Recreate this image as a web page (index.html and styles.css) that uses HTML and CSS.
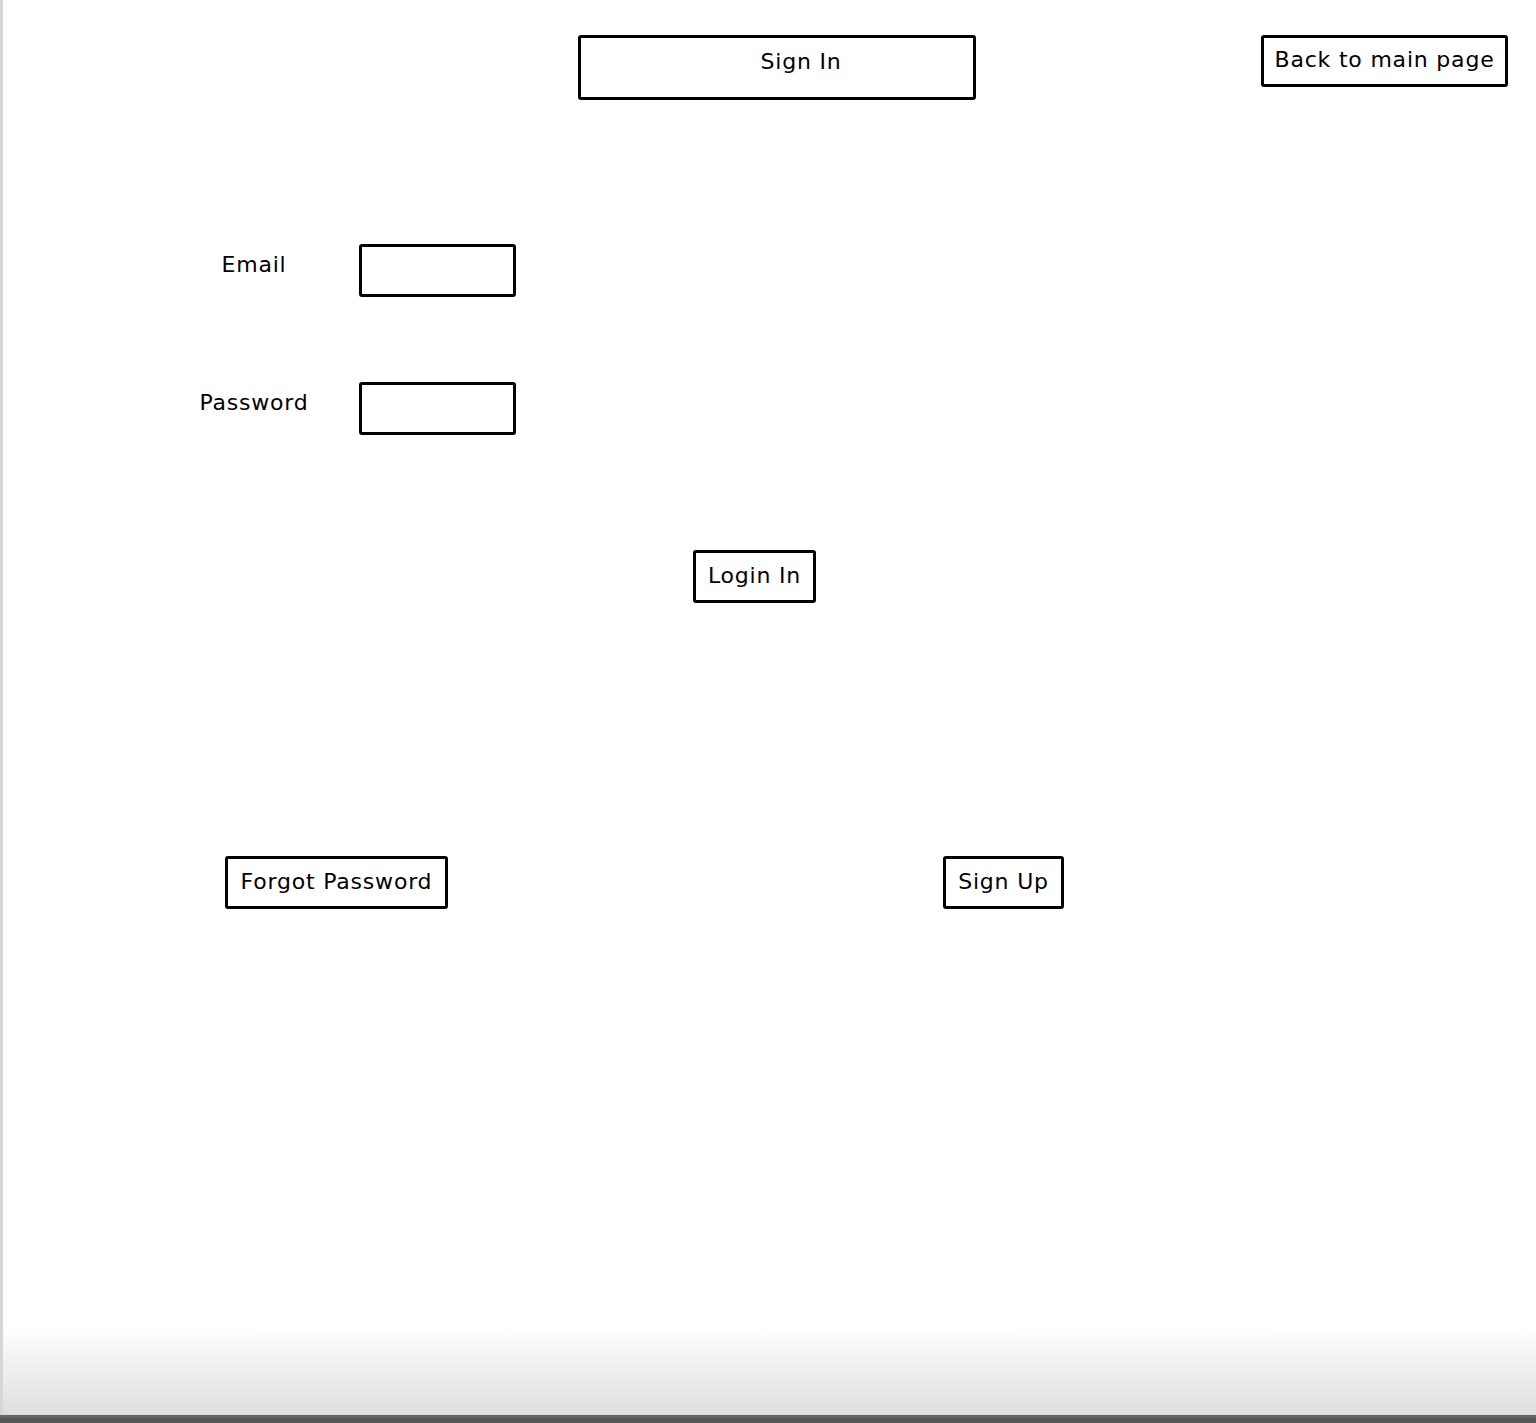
FILE: index.html
```html
<!DOCTYPE html>
<html lang="en">
<head>
<meta charset="utf-8">
<title>Sign In</title>
<link rel="stylesheet" href="styles.css">
</head>
<body>
<div class="page">
  <header class="top-row">
    <div class="title-box">Sign In</div>
    <button class="sketch-btn back-btn">Back to main page</button>
  </header>

  <form class="login-form">
    <div class="field-row">
      <label class="field-label" for="email">Email</label>
      <input class="sketch-input" id="email" type="text">
    </div>
    <div class="field-row">
      <label class="field-label" for="password">Password</label>
      <input class="sketch-input" id="password" type="password">
    </div>
    <div class="login-row">
      <button class="sketch-btn login-btn" type="button">Login In</button>
    </div>
  </form>

  <div class="bottom-row">
    <button class="sketch-btn forgot-btn">Forgot Password</button>
    <button class="sketch-btn signup-btn">Sign Up</button>
  </div>
</div>
<div class="status-bar"></div>
</body>
</html>
```

FILE: styles.css
```css
html, body {
  margin: 0;
  padding: 0;
}

body {
  font-family: "DejaVu Sans", "Open Sans", sans-serif;
  font-size: 22px;
  letter-spacing: 0.8px;
  color: #000;
  background: #fff;
}

.page {
  box-sizing: border-box;
  height: 1415px;
  border-left: 3px solid #d9d5d5;
  padding-top: 35px;
  background: linear-gradient(to bottom, #ffffff 1325px, #dedede 1415px);
}

.status-bar {
  height: 8px;
  background: linear-gradient(to bottom, #646464 0, #646464 3px, #555555 3px);
}

.top-row {
  display: flex;
  align-items: flex-start;
  padding-left: 575px;
  padding-right: 28px;
}

.title-box {
  box-sizing: border-box;
  width: 398px;
  height: 65px;
  border: 3px solid #000;
  border-radius: 3px;
  padding: 9px 0 0 48px;
  line-height: 30px;
  text-align: center;
}

.sketch-btn {
  box-sizing: border-box;
  display: block;
  font: inherit;
  letter-spacing: inherit;
  color: #000;
  background: #fff;
  border: 3px solid #000;
  border-radius: 3px;
  line-height: 30px;
  padding: 8px 0 9px;
  margin: 0;
  text-align: center;
  white-space: nowrap;
  cursor: pointer;
}

.back-btn {
  margin-left: auto;
  width: 247px;
  padding: 7px 0 9px;
}

.login-form {
  display: flex;
  flex-direction: column;
  margin-top: 144px;
}

.field-row {
  display: flex;
  align-items: flex-start;
  gap: 41px;
  padding-left: 187px;
}

.field-row + .field-row {
  margin-top: 85px;
}

.field-label {
  width: 128px;
  padding-top: 6px;
  line-height: 30px;
  text-align: center;
}

.sketch-input {
  box-sizing: border-box;
  width: 157px;
  height: 53px;
  border: 3px solid #000;
  border-radius: 3px;
  background: #fff;
  margin: 0;
}

.login-row {
  display: flex;
  margin-top: 115px;
  padding-left: 690px;
}

.login-btn {
  width: 123px;
}

.bottom-row {
  display: flex;
  gap: 495px;
  margin-top: 253px;
  padding-left: 222px;
}

.forgot-btn {
  width: 223px;
}

.signup-btn {
  width: 121px;
}
```
